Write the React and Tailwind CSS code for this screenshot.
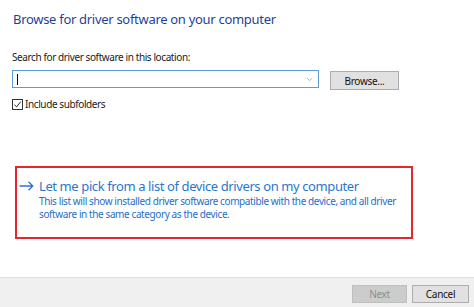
import { ChevronDown } from 'lucide-react';

const font = { fontFamily: '"Noto Sans", "Open Sans", sans-serif' };

function Checkbox() {
    return (
        <span className="w-[11px] h-[11px] border border-[#333] bg-white flex items-center justify-center flex-none">
            <svg viewBox="0 0 10 10" className="w-[9px] h-[9px]">
                <path d="M1.5 5.2 L4 7.6 L8.6 1.8" fill="none" stroke="#222" strokeWidth="1.1" />
            </svg>
        </span>
    );
}

function Arrow() {
    return (
        <svg viewBox="0 0 15 10" className="w-[15px] h-[10px] flex-none">
            <path d="M0.5 5 H13.8 M9.5 0.8 L13.8 5 L9.5 9.2" fill="none" stroke="#2a76cc" strokeWidth="1.3" />
        </svg>
    );
}

export default function App() {
    return (
        <div className="w-[474px] h-[307px] bg-white flex flex-col text-[#1a1a1a] overflow-hidden" style={font}>
            <div className="flex-1 flex flex-col pl-[12px]">
                <h1 className="mt-[9px] ml-[1px] text-[13px] leading-[20px] tracking-[-0.3px] text-[#1f3f9a]">
                    Browse for driver software on your computer
                </h1>

                <p className="mt-[21px] text-[10px] leading-[14px] tracking-[-0.4px]">Search for driver software in this location:</p>

                <div className="mt-[6px] flex items-start">
                    <div className="w-[307px] h-[18px] border border-[#5b9be0] flex items-center justify-between pl-[4px] pr-[4px]">
                        <span className="w-px h-[11px] bg-black" />
                        <ChevronDown className="w-[9px] h-[9px] text-[#777]" strokeWidth={1.5} />
                    </div>
                    <button className="ml-[11px] mt-[1px] w-[69px] h-[19px] bg-[#e1e1e1] border border-[#adadad] text-[10px] leading-none tracking-[-0.3px] text-[#111]">
                        Browse...
                    </button>
                </div>

                <label className="mt-[7px] flex items-center gap-[2px] text-[10px] leading-[14px] tracking-[-0.4px]">
                    <Checkbox />
                    Include subfolders
                </label>

                <div className="mt-[55px] ml-[3px] w-[398px] h-[73px] border-2 border-[#e5262c] pl-[2px] pt-[9px]">
                    <div className="flex items-center text-[#2a76cc] text-[13px] leading-[18px] tracking-[-0.4px]">
                        <Arrow />
                        <span className="ml-[5px]">Let me pick from a list of device drivers on my computer</span>
                    </div>
                    <div className="ml-[20px] text-[10px] leading-[13px] tracking-[-0.4px] text-[#1f6ec8] whitespace-nowrap">
                        <p>This list will show installed driver software compatible with the device, and all driver</p>
                        <p>software in the same category as the device.</p>
                    </div>
                </div>
            </div>

            <div className="h-[30px] flex-none bg-[#f0f0f0] border-t border-[#dfdfdf] flex items-start justify-end gap-[5px] pt-[7px] pr-[5px]">
                <button className="w-[55px] h-[18px] bg-[#cccccc] border border-[#bfbfbf] text-[10px] leading-none tracking-[-0.3px] text-[#8d8d8d]">
                    Next
                </button>
                <button className="w-[57px] h-[18px] bg-[#e1e1e1] border border-[#adadad] text-[10px] leading-none tracking-[-0.3px] text-[#111]">
                    Cancel
                </button>
            </div>
        </div>
    );
}
